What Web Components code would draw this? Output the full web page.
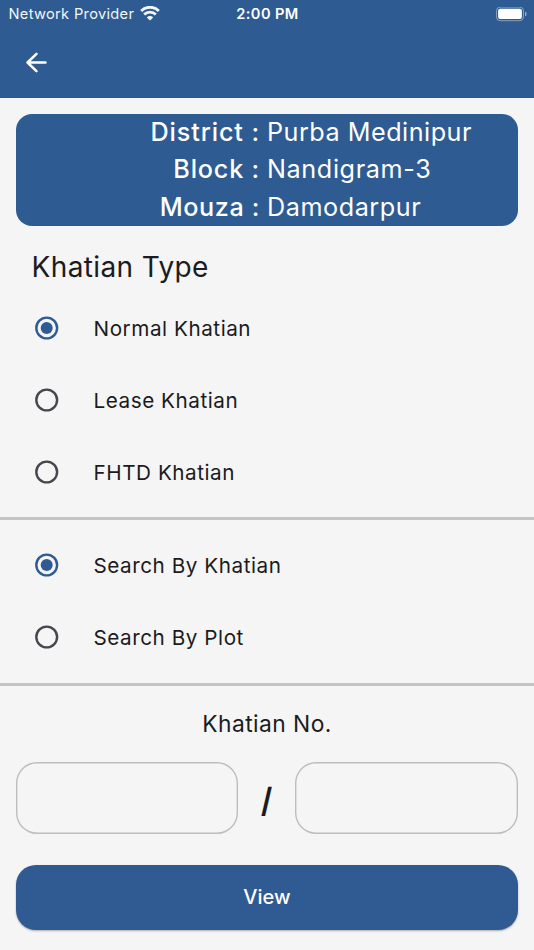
<!DOCTYPE html>
<html lang="en">
<head>
<meta charset="utf-8">
<title>Khatian search</title>
<style>
html, body { margin: 0; height: 100%; }
body { background: #f5f5f5; font-family: Inter, "Liberation Sans", sans-serif; color: #1b1b20; overflow: hidden; --blue: #2e5b92; }
</style>
</head>
<body>
<khatian-page></khatian-page>
<script>
const define = (name, html, setup) => {
  const template = document.createElement('template');
  template.innerHTML = html;
  customElements.define(name, class extends HTMLElement {
    connectedCallback() {
      if (this.shadowRoot) return;
      this.attachShadow({ mode: 'open' }).append(template.content.cloneNode(true));
      if (setup) setup(this, this.shadowRoot);
    }
  });
};

define('status-bar', `
<style>
:host { display: grid; grid-template-columns: 1fr auto 1fr; align-items: center; height: 27px; padding: 0 7.5px 0 8.5px; color: #fff; font-size: 14.6px; line-height: 27px; }
.carrier { display: flex; align-items: center; gap: 5.5px; letter-spacing: .33px; opacity: .95; white-space: nowrap; }
.carrier svg { margin-top: -1px; }
.time { font-weight: 600; letter-spacing: .42px; }
.carrier span, .time { padding-top: 1px; }
.battery { justify-self: end; }
svg { display: block; }
</style>
<div class="carrier"><span>Network Provider</span>
<svg width="20" height="15" viewBox="0 0 20 15" fill="none" stroke="#fff"><path d="M1.2 5A12.4 12.4 0 0 1 18.8 5" stroke-width="3"/><path d="M4.200 8.500A8.100 8.100 0 0 1 15.800 8.500" stroke-width="2.800"/><path d="M10 14.500L6.800 11.400A4.400 4.400 0 0 1 13.200 11.400Z" fill="#fff" stroke="none"/></svg></div>
<span class="time">2:00 PM</span>
<svg class="battery" width="31" height="15" viewBox="0 0 31 15"><rect x=".5" y=".1" width="27" height="13.6" rx="3.7" fill="none" stroke="#fff" stroke-opacity=".42"/><rect x="2.1" y="1.7" width="23.8" height="10.4" rx="2.1" fill="#fff"/><path d="M29 4.500v4.8c1-.4 1.6-1.3 1.6-2.4S30 4.900 29 4.500Z" fill="#fff" fill-opacity=".5"/></svg>
`);

define('app-bar', `
<style>
:host { display: flex; align-items: center; height: 69px; padding: 0 24px; box-sizing: border-box; }
svg { display: block; }
</style>
<svg width="24" height="24" viewBox="0 0 24 24" fill="none" stroke="#fff" stroke-width="2.5" stroke-linecap="round" stroke-linejoin="round"><path d="M21.500 12.500H3.500M12.500 3.800L3.500 12.500L12.500 21.200"/></svg>
`);

define('place-row', `
<style>
:host { display: grid; grid-template-columns: 244px 1fr; height: 37.500px; line-height: 37.500px; font-size: 25.200px; color: #fff; white-space: nowrap; }
.label { text-align: right; font-weight: 500; letter-spacing: var(--label-space, .8px); }
.value { padding-left: 7px; letter-spacing: var(--value-space, .58px); }
</style>
<span class="label"><slot name="label"></slot></span><span class="value"><slot></slot></span>
`);

define('place-card', `
<style>
:host { display: block; margin: 15.500px 16px 0; height: 112.500px; border-radius: 16px; background: var(--blue); }
</style><slot></slot>
`);

define('radio-option', `
<style>
:host { display: flex; align-items: center; height: 72.200px; padding-left: 34.500px; gap: 34.500px; font-size: 20.700px; letter-spacing: .54px; white-space: nowrap; }
svg { display: block; flex: none; color: #48454f; }
:host([checked]) svg { color: var(--blue); }
circle + circle { display: none; }
:host([checked]) circle + circle { display: block; }
span { padding: 1px 0 0 .5px; }
</style>
<svg width="24" height="24" viewBox="0 0 24 24"><circle cx="11.700" cy="12" r="10.400" fill="none" stroke="currentColor" stroke-width="2.400"/><circle cx="11.700" cy="12" r="6" fill="currentColor"/></svg>
<span><slot></slot></span>
`, host => { host.setAttribute('role', 'radio'); host.setAttribute('aria-checked', host.hasAttribute('checked')); });

define('radio-group', `
<style>
:host { display: block; padding: var(--group-padding, 10px 0 10px); border-bottom: 3px solid #c4c4c4; }
</style><slot></slot>
`);

define('number-box', `
<style>
:host { display: block; flex: 1; min-width: 0; }
input { display: block; width: 100%; height: 72px; box-sizing: border-box; margin: 0; padding: 0 16px; border: 0; box-shadow: inset 0 0 0 1.400px #bdbdbd; border-radius: 21px; background: none; font: 20px Inter, sans-serif; outline: none; }
</style><input type="text">
`);

define('number-pair', `
<style>
:host { display: flex; align-items: center; padding: 0 16px 0 15.500px; }
.slash { width: 57px; text-align: center; font-size: 33.500px; font-weight: 700; line-height: 72px; height: 72px; }
.slash span { display: inline-block; transform: translateY(2px) scaleX(.86); }
</style><number-box></number-box><div class="slash"><span>/</span></div><number-box></number-box>
`);

define('view-button', `
<style>
:host { display: block; margin: 31px 15.700px 0; }
button { display: block; width: 100%; height: 65px; border: 0; padding: 0; border-radius: 20px; background: #305a92; color: #fff; font: 500 20px Inter, sans-serif; letter-spacing: .1px; box-shadow: 0 1px 2px rgba(0,0,0,.3); }
</style><button><slot></slot></button>
`);

define('khatian-page', `
<style>
:host { display: block; height: 950px; overflow: hidden; }
header { background: var(--blue); height: 98px; }
h1 { margin: 20.500px 0 0 31.500px; height: 41px; line-height: 41px; font-size: 28px; font-weight: 400; letter-spacing: .38px; }
h2 { margin: 18.500px 0 0; height: 40px; line-height: 40px; text-align: center; font-size: 22.800px; font-weight: 400; letter-spacing: .44px; }
number-pair { margin-top: 17.300px; }
.type { --group-padding: 4.500px 0 8.400px; }
.search { --group-padding: 8.900px 0 9.600px; }
</style>
<header><status-bar></status-bar><app-bar></app-bar></header>
<place-card>
<place-row style="--label-space:.9px;--value-space:.5px"><span slot="label">District :</span>Purba Medinipur</place-row>
<place-row style="--label-space:.8px;--value-space:.62px"><span slot="label">Block :</span>Nandigram-3</place-row>
<place-row style="--label-space:.6px;--value-space:.55px"><span slot="label">Mouza :</span>Damodarpur</place-row>
</place-card>
<h1>Khatian Type</h1>
<radio-group class="type" role="radiogroup"><radio-option checked>Normal Khatian</radio-option><radio-option>Lease Khatian</radio-option><radio-option>FHTD Khatian</radio-option></radio-group>
<radio-group class="search" role="radiogroup"><radio-option checked>Search By Khatian</radio-option><radio-option>Search By Plot</radio-option></radio-group>
<h2>Khatian No.</h2>
<number-pair></number-pair>
<view-button>View</view-button>
`);
</script>
</body>
</html>
